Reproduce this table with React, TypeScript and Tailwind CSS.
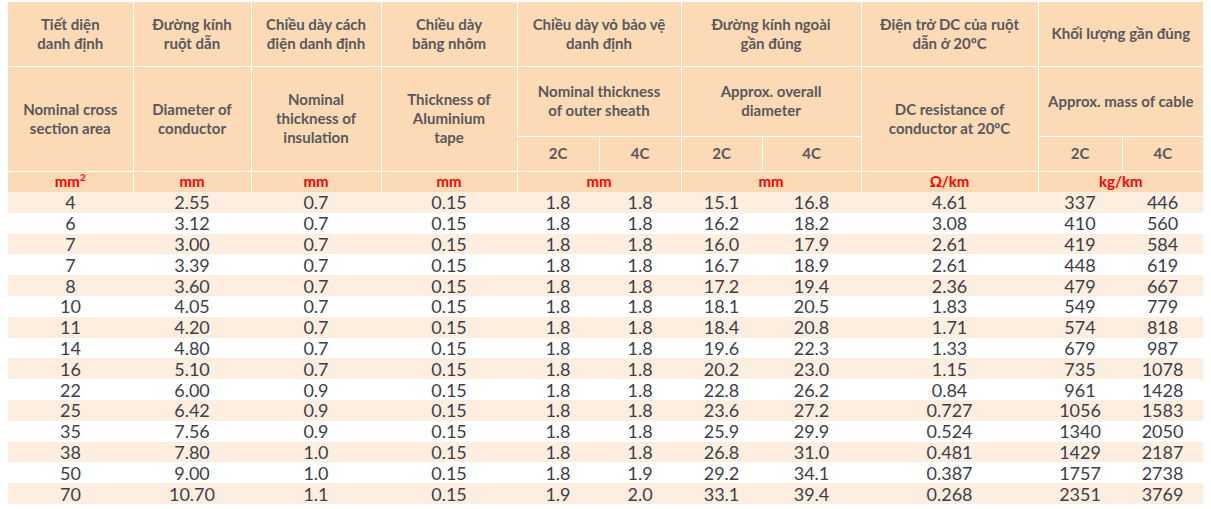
import React from "react";

const rows: string[][] = [
  ["4", "2.55", "0.7", "0.15", "1.8", "1.8", "15.1", "16.8", "4.61", "337", "446"],
  ["6", "3.12", "0.7", "0.15", "1.8", "1.8", "16.2", "18.2", "3.08", "410", "560"],
  ["7", "3.00", "0.7", "0.15", "1.8", "1.8", "16.0", "17.9", "2.61", "419", "584"],
  ["7", "3.39", "0.7", "0.15", "1.8", "1.8", "16.7", "18.9", "2.61", "448", "619"],
  ["8", "3.60", "0.7", "0.15", "1.8", "1.8", "17.2", "19.4", "2.36", "479", "667"],
  ["10", "4.05", "0.7", "0.15", "1.8", "1.8", "18.1", "20.5", "1.83", "549", "779"],
  ["11", "4.20", "0.7", "0.15", "1.8", "1.8", "18.4", "20.8", "1.71", "574", "818"],
  ["14", "4.80", "0.7", "0.15", "1.8", "1.8", "19.6", "22.3", "1.33", "679", "987"],
  ["16", "5.10", "0.7", "0.15", "1.8", "1.8", "20.2", "23.0", "1.15", "735", "1078"],
  ["22", "6.00", "0.9", "0.15", "1.8", "1.8", "22.8", "26.2", "0.84", "961", "1428"],
  ["25", "6.42", "0.9", "0.15", "1.8", "1.8", "23.6", "27.2", "0.727", "1056", "1583"],
  ["35", "7.56", "0.9", "0.15", "1.8", "1.8", "25.9", "29.9", "0.524", "1340", "2050"],
  ["38", "7.80", "1.0", "0.15", "1.8", "1.8", "26.8", "31.0", "0.481", "1429", "2187"],
  ["50", "9.00", "1.0", "0.15", "1.8", "1.9", "29.2", "34.1", "0.387", "1757", "2738"],
  ["70", "10.70", "1.1", "0.15", "1.9", "2.0", "33.1", "39.4", "0.268", "2351", "3769"],
];

// header cell
const th = "border border-white bg-[#fddab6] text-[#58585c] font-bold text-[15px] leading-[19px] text-center align-middle p-0";
const unit = "border-x border-white bg-[#fddab6] text-[#ff0000] font-bold text-[15px] leading-[19px] text-center align-middle p-0 h-[21px]";

export default function App() {
  return (
    <div className="w-[1211px] h-[509px] bg-white pl-[8px] pt-[2px] overflow-hidden" style={{ fontFamily: "Lato, 'Noto Sans', sans-serif" }}>
      <table className="table-fixed border-collapse w-[1195px]">
        <colgroup>
          <col className="w-[125px]" />
          <col className="w-[118px]" />
          <col className="w-[130px]" />
          <col className="w-[136px]" />
          <col className="w-[82px]" />
          <col className="w-[82px]" />
          <col className="w-[81px]" />
          <col className="w-[99px]" />
          <col className="w-[177px]" />
          <col className="w-[84px]" />
          <col className="w-[81px]" />
        </colgroup>
        <thead>
          <tr className="h-[64px]">
            <th className={`${th} border-t-0 border-l-0`}>Tiết diện<br />danh định</th>
            <th className={`${th} border-t-0`}>Đường kính<br />ruột dẫn</th>
            <th className={`${th} border-t-0`}>Chiều dày cách<br />điện danh định</th>
            <th className={`${th} border-t-0`}>Chiều dày<br />băng nhôm</th>
            <th colSpan={2} className={`${th} border-t-0`}>Chiều dày vỏ bảo vệ<br />danh định</th>
            <th colSpan={2} className={`${th} border-t-0`}>Đường kính ngoài<br />gần đúng</th>
            <th className={`${th} border-t-0`}>Điện trở DC của ruột<br />dẫn ở 20ºC</th>
            <th colSpan={2} className={`${th} border-t-0 border-r-0`}>Khối lượng gần đúng</th>
          </tr>
          <tr className="h-[70px]">
            <th rowSpan={2} className={`${th} border-l-0`}>Nominal cross<br />section area</th>
            <th rowSpan={2} className={th}>Diameter of<br />conductor</th>
            <th rowSpan={2} className={th}>Nominal<br />thickness of<br />insulation</th>
            <th rowSpan={2} className={th}>Thickness of<br />Aluminium<br />tape</th>
            <th colSpan={2} className={th}>Nominal thickness<br />of outer sheath</th>
            <th colSpan={2} className={th}>Approx. overall<br />diameter</th>
            <th rowSpan={2} className={th}>DC resistance of<br />conductor at 20ºC</th>
            <th colSpan={2} className={`${th} border-r-0`}>Approx. mass of cable</th>
          </tr>
          <tr className="h-[35px]">
            <th className={th}>2C</th>
            <th className={th}>4C</th>
            <th className={th}>2C</th>
            <th className={th}>4C</th>
            <th className={th}>2C</th>
            <th className={`${th} border-r-0`}>4C</th>
          </tr>
          <tr>
            <th className={`${unit} border-l-0`}>mm<span className="text-[10px] leading-none relative -top-[6px]">2</span></th>
            <th className={unit}>mm</th>
            <th className={unit}>mm</th>
            <th className={unit}>mm</th>
            <th colSpan={2} className={unit}>mm</th>
            <th colSpan={2} className={unit}>mm</th>
            <th className={unit}>Ω/km</th>
            <th colSpan={2} className={`${unit} border-r-0`}>kg/km</th>
          </tr>
        </thead>
        <tbody>
          {rows.map((r, i) => (
            <tr key={i} className={i % 2 === 0 ? "bg-[#fdeee0] h-[20.8px]" : "bg-white h-[20.8px]"}>
              {r.map((v, j) => (
                <td key={j} className="p-0 text-center align-middle text-[18px] leading-[20px] text-[#3e3e48]">
                  {v}
                </td>
              ))}
            </tr>
          ))}
        </tbody>
      </table>
    </div>
  );
}
